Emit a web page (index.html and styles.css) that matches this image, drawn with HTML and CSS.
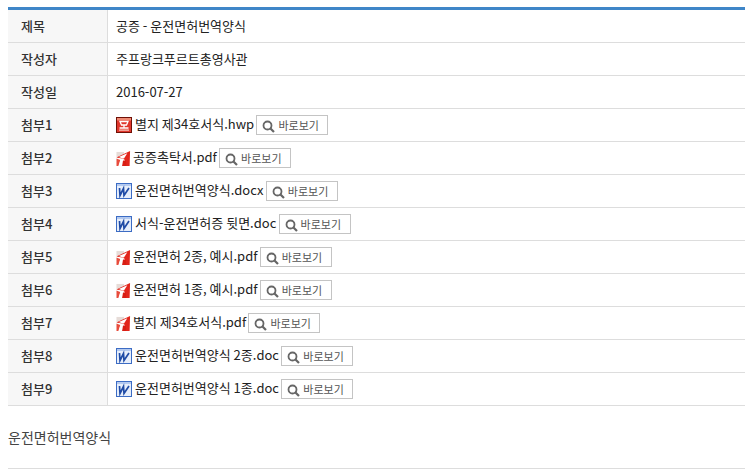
FILE: index.html
```html
<!DOCTYPE html>
<html lang="ko">
<head>
<meta charset="utf-8">
<title>공증 - 운전면허번역양식</title>
<link rel="stylesheet" href="styles.css">
</head>
<body>
<svg class="defs" width="0" height="0" aria-hidden="true">
  <symbol id="i-hwp" viewBox="0 0 16 16">
    <rect x="0.5" y="0.5" width="15" height="15" fill="#e0362c" stroke="#6e1006"/>
    <rect x="1" y="1" width="14" height="2.500" fill="#ef8a74"/>
    <path d="M4 4.500h8L10.500 8h-5z" fill="none" stroke="#fff" stroke-width="1.300"/>
    <path d="M8 8v3M3.500 11h9" fill="none" stroke="#fff" stroke-width="1.300"/>
    <rect x="3" y="12.500" width="10" height="1.200" fill="#f7cfc4"/>
  </symbol>
  <symbol id="i-pdf" viewBox="0 0 15 16">
    <rect x="0" y="1" width="8" height="6" fill="#e6dcd8"/>
    <path d="M0 7L6 4 14.500 0 14 16H10L8.500 9 6 8z" fill="#e2261c"/>
    <path d="M2.500 6.500L11.500 2.500 8 8 6.500 8z" fill="#fff"/>
    <path d="M0 8L4 9.500 2 16H0z" fill="#e84c3c"/>
    <path d="M4.500 9L7 9.500 6 16H2.500z" fill="#fff"/>
    <path d="M7 10L10 10.500 10.500 16H6z" fill="#d81e14"/>
  </symbol>
  <symbol id="i-doc" viewBox="0 0 16 16">
    <rect x="0.5" y="0.5" width="15" height="15" fill="#e6eefb" stroke="#3c6cc4"/>
    <rect x="1" y="1" width="14" height="2" fill="#b4caf0"/>
    <path d="M3.500 5l.5 7.500L7.500 5.500l.5 7L13 5" fill="none" stroke="#1f4ba6" stroke-width="1.700"/>
  </symbol>
  <symbol id="i-search" viewBox="0 0 13 13">
    <circle cx="5.500" cy="5.500" r="4" fill="none" stroke="#666" stroke-width="1.800"/>
    <path d="M8.500 8.500l3.500 3.500" stroke="#666" stroke-width="2.200"/>
  </symbol>
</svg>
<table class="view">
  <tbody>
    <tr><th>제목</th><td>공증 - 운전면허번역양식</td></tr>
    <tr><th>작성자</th><td>주프랑크푸르트총영사관</td></tr>
    <tr><th>작성일</th><td>2016-07-27</td></tr>
    <tr><th>첨부1</th><td><svg class="ficon"><use href="#i-hwp"/></svg><a class="fname">별지 제34호서식.hwp</a><a class="preview"><svg class="sicon"><use href="#i-search"/></svg>바로보기</a></td></tr>
    <tr><th>첨부2</th><td><svg class="ficon pdf"><use href="#i-pdf"/></svg><a class="fname">공증촉탁서.pdf</a><a class="preview"><svg class="sicon"><use href="#i-search"/></svg>바로보기</a></td></tr>
    <tr><th>첨부3</th><td><svg class="ficon"><use href="#i-doc"/></svg><a class="fname">운전면허번역양식.docx</a><a class="preview"><svg class="sicon"><use href="#i-search"/></svg>바로보기</a></td></tr>
    <tr><th>첨부4</th><td><svg class="ficon"><use href="#i-doc"/></svg><a class="fname">서식-운전면허증 뒷면.doc</a><a class="preview"><svg class="sicon"><use href="#i-search"/></svg>바로보기</a></td></tr>
    <tr><th>첨부5</th><td><svg class="ficon pdf"><use href="#i-pdf"/></svg><a class="fname">운전면허 2종, 예시.pdf</a><a class="preview"><svg class="sicon"><use href="#i-search"/></svg>바로보기</a></td></tr>
    <tr><th>첨부6</th><td><svg class="ficon pdf"><use href="#i-pdf"/></svg><a class="fname">운전면허 1종, 예시.pdf</a><a class="preview"><svg class="sicon"><use href="#i-search"/></svg>바로보기</a></td></tr>
    <tr><th>첨부7</th><td><svg class="ficon pdf"><use href="#i-pdf"/></svg><a class="fname">별지 제34호서식.pdf</a><a class="preview"><svg class="sicon"><use href="#i-search"/></svg>바로보기</a></td></tr>
    <tr><th>첨부8</th><td><svg class="ficon"><use href="#i-doc"/></svg><a class="fname">운전면허번역양식 2종.doc</a><a class="preview"><svg class="sicon"><use href="#i-search"/></svg>바로보기</a></td></tr>
    <tr><th>첨부9</th><td><svg class="ficon"><use href="#i-doc"/></svg><a class="fname">운전면허번역양식 1종.doc</a><a class="preview"><svg class="sicon"><use href="#i-search"/></svg>바로보기</a></td></tr>
  </tbody>
</table>
<p class="body-text">운전면허번역양식</p>
<hr class="rule">
</body>
</html>
```
FILE: styles.css
```css
html, body { margin: 0; padding: 0; background: #fff; }
body {
  padding: 7px 0 0 8px;
  font-family: "Noto Sans CJK KR", "Noto Sans", sans-serif;
  font-size: 13px;
  color: #333;
  overflow: hidden;
}
.defs { position: absolute; }
.view {
  width: 737px;
  border-collapse: separate;
  border-spacing: 0;
  border-top: 3px solid #3f86c8;
}
.view th, .view td {
  height: 33px;
  padding: 0;
  border-bottom: 1px solid #ddd;
  font-size: 13px;
  line-height: 18px;
  vertical-align: middle;
  box-sizing: border-box;
}
.view th {
  width: 100px;
  padding-left: 13px;
  text-align: left;
  font-weight: 500;
  color: #333;
  background: #f7f7f7;
  border-right: 1px solid #ddd;
}
.view td { padding-left: 8px; color: #222; word-spacing: -0.7px; }
.ficon { width: 16px; height: 16px; margin-right: 3px; vertical-align: -4px; }
.ficon.pdf { width: 15px; height: 15px; margin-right: 2px; }
.fname { color: #222; }
.preview {
  display: inline-block;
  box-sizing: border-box;
  width: 72px;
  height: 20px;
  margin-left: 2.3px;
  padding-left: 5px;
  border: 1px solid #c4c4c4;
  line-height: 18px;
  font-size: 11px;
  color: #555;
  vertical-align: middle;
  white-space: nowrap;
}
.sicon { width: 13px; height: 13px; margin-right: 3px; vertical-align: -3px; }
.body-text { margin: 21px 0 0; font-size: 14px; line-height: 20px; color: #444; }
.rule { margin: 21px 0 0; width: 737px; border: 0; border-top: 1px solid #ddd; }
```
